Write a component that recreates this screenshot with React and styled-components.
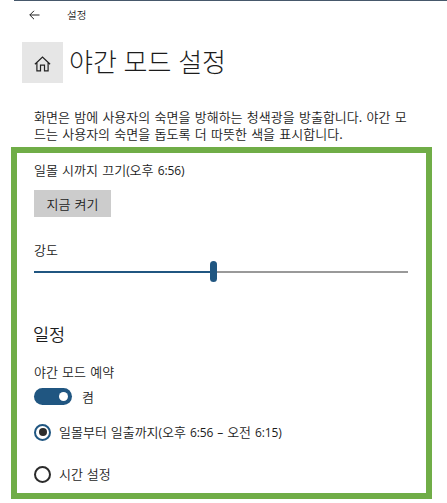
import React, {useState} from 'react';
import styled, {createGlobalStyle} from 'styled-components';

const GlobalStyle = createGlobalStyle`
* {
  box-sizing: border-box;
}
body {
  margin: 0;
  background: #fff;
  color: #1c1c1c;
  font-family: "Noto Sans CJK KR", sans-serif;
}
`;

const Window = styled.div`
width: 447px;
height: 503px;
overflow: hidden;
font-weight: 350;
`;

const TopEdge = styled.div`
height: 1px;
margin-left: 14px;
background: #46586b;
`;

const TitleBar = styled.header`
display: flex;
align-items: center;
height: 28px;
padding-left: 29px;
font-size: 10.5px;
line-height: 16px;
span {
  margin-left: 27px;
}
`;

const PageHeader = styled.div`
display: flex;
height: 41px;
margin: 13px 0 0 22px;
`;

const HomeButton = styled.button`
display: flex;
align-items: center;
justify-content: center;
width: 41px;
height: 41px;
padding: 2px 0 0;
border: 0;
background: #e6e6e6;
color: #222;
`;

const Title = styled.h1`
margin: 0 0 0 6px;
font-size: 26px;
font-weight: 300;
line-height: 37px;
word-spacing: 1px;
white-space: nowrap;
`;

const Description = styled.p`
height: 34px;
margin: 25px 0 0 34px;
font-size: 13px;
line-height: 17px;
word-spacing: 1.4px;
white-space: nowrap;
`;

const Panel = styled.main`
display: flex;
flex-direction: column;
align-items: flex-start;
width: 421px;
height: 352px;
margin: 5px 0 0 11px;
padding: 7px 18px 0 17px;
border: 6px solid #70ad47;
`;

const Label = styled.div`
margin-top: ${props => props.$top || 0}px;
font-size: 13px;
line-height: 20px;
word-spacing: 1.3px;
white-space: nowrap;
`;

const SectionTitle = styled.h2`
margin: 42px 0 0 -1px;
font-size: 17.5px;
font-weight: 350;
line-height: 20px;
`;

/* digits and brackets are narrower than the korean glyphs */
const Time = styled.span`
font-family: "Open Sans", "Noto Sans", sans-serif;
font-size: 12px;
font-weight: 400;
letter-spacing: -0.1px;
`;

const TurnOnButton = styled.button`
width: 77px;
height: 27px;
margin-top: 9px;
padding: 0;
border: 0;
background: #ccc;
color: #1c1c1c;
font-family: inherit;
font-size: 13px;
font-weight: 350;
line-height: 26px;
word-spacing: 1.3px;
`;

const Slider = styled.div`
display: flex;
align-items: center;
width: 374px;
height: 21px;
margin-top: 1px;
`;

const Filled = styled.div`
width: 176px;
height: 2px;
background: #205681;
`;

const Thumb = styled.div`
width: 7px;
height: 21px;
border-radius: 4px;
background: #205681;
`;

const Rest = styled.div`
flex: 1;
height: 2px;
background: #999;
`;

const ToggleRow = styled.div`
display: flex;
align-items: center;
height: 18px;
margin-top: 5px;
`;

const Toggle = styled.button`
display: flex;
align-items: center;
justify-content: ${props => (props.$on ? 'flex-end' : 'flex-start')};
width: 38px;
height: 17px;
padding: 0 4px;
border: 0;
border-radius: 9px;
background: #205681;
&:after {
  content: "";
  width: 9px;
  height: 9px;
  border-radius: 50%;
  background: #fff;
}
`;

const ToggleText = styled.span`
margin-left: 10px;
padding-top: 2px;
font-size: 13px;
line-height: 18px;
`;

const Option = styled.div`
display: flex;
align-items: center;
height: 20px;
margin-top: ${props => props.$top}px;
font-size: 13px;
line-height: 20px;
word-spacing: 1px;
white-space: nowrap;
`;

const Radio = styled.span`
display: flex;
align-items: center;
justify-content: center;
width: 17px;
height: 17px;
margin-right: 8px;
border: 2px solid ${props => (props.$checked ? '#205681' : '#2b2b2b')};
border-radius: 50%;
&:after {
  content: "";
  width: 8px;
  height: 8px;
  border-radius: 50%;
  background: ${props => (props.$checked ? '#2b2b2b' : 'transparent')};
}
`;

const BackIcon = () => (
    <svg width="11" height="10" viewBox="0 0 11 10" fill="none" stroke="#222" strokeWidth="1">
        <path d="M10.5 5H.8M5 .8.8 5 5 9.2"/>
    </svg>
);

const HomeIcon = () => (
    <svg width="17" height="16" viewBox="0 0 17 16" fill="none" stroke="currentColor" strokeWidth="1.2">
        <path d="M.9 8.3 8.5 1l7.6 7.3M2.9 6.8v8h3.6V9.2h4v5.6h3.6v-8"/>
    </svg>
);

function App() {
    const [on, setOn] = useState(true);
    const [schedule, setSchedule] = useState('sunset');

    return (
        <Window>
            <GlobalStyle/>
            <TopEdge/>
            <TitleBar>
                <BackIcon/>
                <span>설정</span>
            </TitleBar>
            <PageHeader>
                <HomeButton><HomeIcon/></HomeButton>
                <Title>야간 모드 설정</Title>
            </PageHeader>
            <Description>
                화면은 밤에 사용자의 숙면을 방해하는 청색광을 방출합니다. 야간 모<br/>
                드는 사용자의 숙면을 돕도록 더 따뜻한 색을 표시합니다.
            </Description>
            <Panel>
                <Label>일몰 시까지 끄기<Time>(</Time>오후 <Time>6:56)</Time></Label>
                <TurnOnButton>지금 켜기</TurnOnButton>
                <Label $top={23}>강도</Label>
                <Slider>
                    <Filled/>
                    <Thumb/>
                    <Rest/>
                </Slider>
                <SectionTitle>일정</SectionTitle>
                <Label $top={18}>야간 모드 예약</Label>
                <ToggleRow>
                    <Toggle $on={on} onClick={() => setOn(!on)}/>
                    <ToggleText>{on ? '켬' : '끔'}</ToggleText>
                </ToggleRow>
                <Option $top={17} onClick={() => setSchedule('sunset')}>
                    <Radio $checked={schedule === 'sunset'}/>
                    <span>일몰부터 일출까지<Time>(</Time>오후 <Time>6:56 – </Time>오전 <Time>6:15)</Time></span>
                </Option>
                <Option $top={22} onClick={() => setSchedule('hours')}>
                    <Radio $checked={schedule === 'hours'}/>
                    <span>시간 설정</span>
                </Option>
            </Panel>
        </Window>
    );
}

export default App;
